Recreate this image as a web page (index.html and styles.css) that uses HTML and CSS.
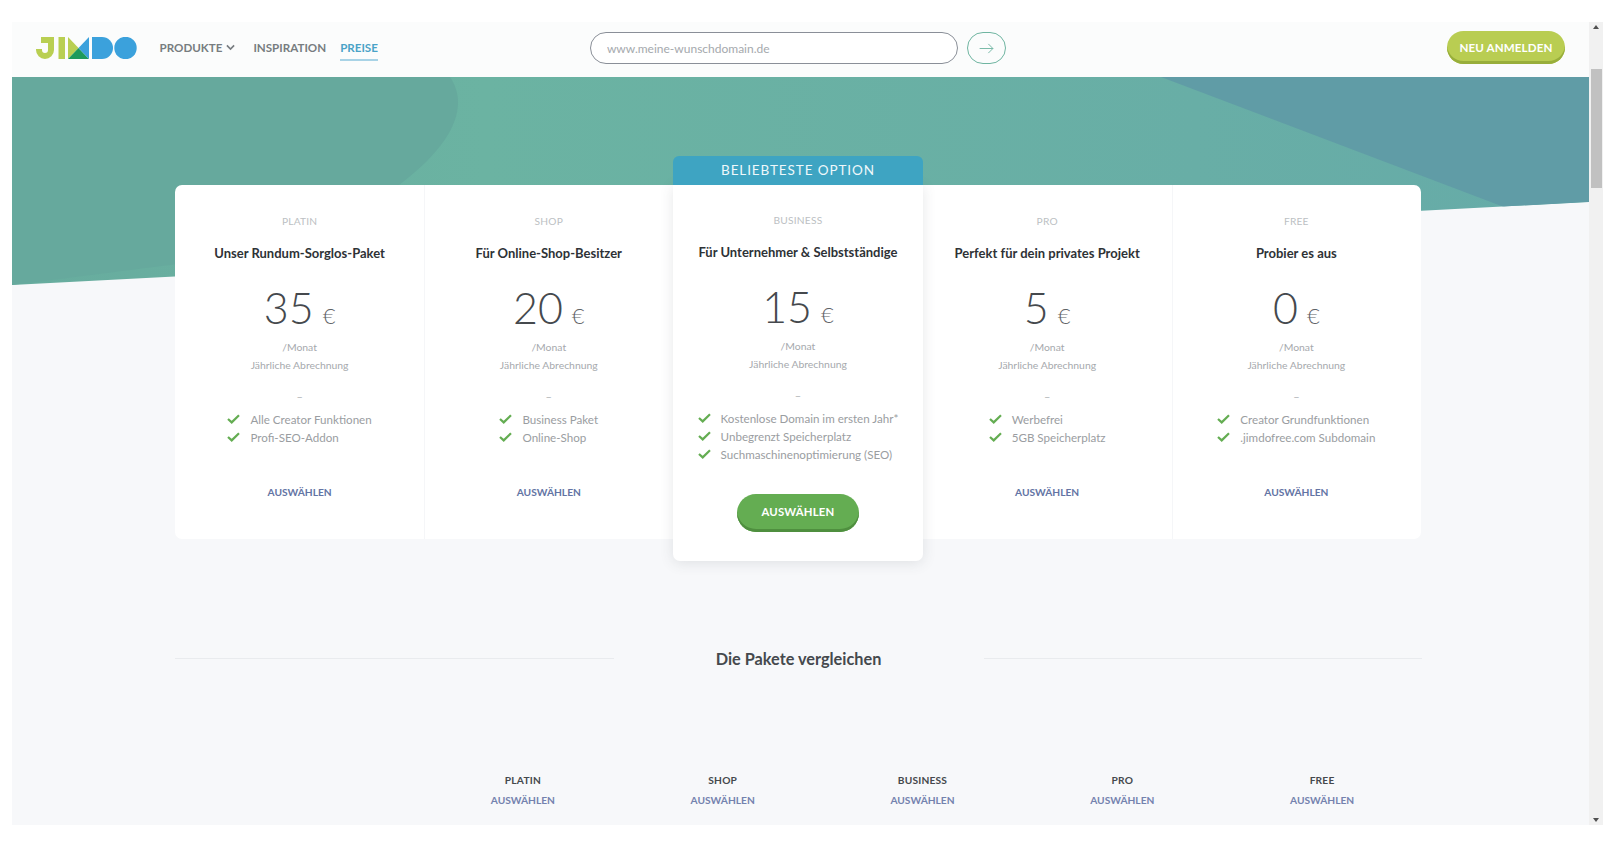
FILE: index.html
```html
<!DOCTYPE html>
<html lang="de">
<head>
<meta charset="utf-8">
<title>Jimdo Preise</title>
<link rel="stylesheet" href="styles.css">
</head>
<body>
<div class="window">
  <div class="page">
    <header class="topbar">
      <svg class="logo" viewBox="0 0 101 22" width="101" height="22" aria-label="Jimdo">
        <path fill="#b9cf52" d="M5 0H18V13A9 9 0 0 1 0 13V12H6V13A3 3 0 0 0 12 13V6H5Z"/>
        <rect fill="#b9cf52" x="22.5" y="0" width="6.5" height="22"/>
        <path fill="#b9cf52" d="M32 0 42.5 11 32 22Z"/>
        <path fill="#1d9a5b" d="M32 22 42.5 11 53 22Z"/>
        <path fill="#3ba1dc" d="M53 0V22L42.5 11Z"/>
        <path fill="#3ba1dc" d="M56 0H66A11 11 0 0 1 66 22H56Z"/>
        <circle fill="#3ba1dc" cx="89.5" cy="11" r="11.2"/>
      </svg>
      <nav class="nav">
        <a class="nav-link nav-products">PRODUKTE
          <svg class="chevron" viewBox="0 0 10 7" width="9" height="7"><path d="M1 1.2 5 5.2 9 1.2" fill="none" stroke="#777c80" stroke-width="1.8"/></svg>
        </a>
        <a class="nav-link nav-inspiration">INSPIRATION</a>
        <a class="nav-link nav-active">PREISE</a>
      </nav>
      <div class="domain">
        <input class="domain-input" type="text" placeholder="www.meine-wunschdomain.de">
        <button class="domain-go" aria-label="Suchen">
          <svg viewBox="0 0 16 12" width="15" height="11"><path d="M0.5 6H15M10 1 15 6 10 11" fill="none" stroke="#6fb5a1" stroke-width="1"/></svg>
        </button>
      </div>
      <a class="signup">NEU ANMELDEN</a>
    </header>

    <main class="main">
      <svg class="hero" viewBox="0 0 1577 208" width="1577" height="208" aria-hidden="true">
        <defs>
          <linearGradient id="heroFill" x1="0" x2="1" y1="0" y2="0">
            <stop offset="0" stop-color="#67ac9e"/>
            <stop offset="0.3" stop-color="#6bb3a2"/>
            <stop offset="0.75" stop-color="#68aea6"/>
            <stop offset="1" stop-color="#66aba8"/>
          </linearGradient>
          <clipPath id="heroClip"><path d="M0 0H1577V125L0 208Z"/></clipPath>
        </defs>
        <g clip-path="url(#heroClip)">
          <rect width="1577" height="208" fill="url(#heroFill)"/>
          <path fill="#66a99d" d="M0 0H438C455 25 448 62 387 108L300 170 0 208Z"/>
          <path fill="#609ca6" d="M1149 0 1492 130 1577 125V0Z"/>
        </g>
      </svg>

      <section class="plans">
        <article class="plan">
          <div class="tier">PLATIN</div>
          <h2 class="tagline">Unser Rundum-Sorglos-Paket</h2>
          <div class="price"><span class="amount">35</span><span class="currency">€</span></div>
          <p class="billing">/Monat<br>Jährliche Abrechnung</p>
          <div class="dash">–</div>
          <ul class="features">
            <li><svg class="check" viewBox="0 0 13 10" width="13" height="10"><path d="M1 5 4.7 8.4 12 1.2" fill="none" stroke="#64ad52" stroke-width="2.2"/></svg>Alle Creator Funktionen</li>
            <li><svg class="check" viewBox="0 0 13 10" width="13" height="10"><path d="M1 5 4.7 8.4 12 1.2" fill="none" stroke="#64ad52" stroke-width="2.2"/></svg>Profi-SEO-Addon</li>
          </ul>
          <a class="choose">AUSWÄHLEN</a>
        </article>
        <article class="plan">
          <div class="tier">SHOP</div>
          <h2 class="tagline">Für Online-Shop-Besitzer</h2>
          <div class="price"><span class="amount">20</span><span class="currency">€</span></div>
          <p class="billing">/Monat<br>Jährliche Abrechnung</p>
          <div class="dash">–</div>
          <ul class="features">
            <li><svg class="check" viewBox="0 0 13 10" width="13" height="10"><path d="M1 5 4.7 8.4 12 1.2" fill="none" stroke="#64ad52" stroke-width="2.2"/></svg>Business Paket</li>
            <li><svg class="check" viewBox="0 0 13 10" width="13" height="10"><path d="M1 5 4.7 8.4 12 1.2" fill="none" stroke="#64ad52" stroke-width="2.2"/></svg>Online-Shop</li>
          </ul>
          <a class="choose">AUSWÄHLEN</a>
        </article>
        <article class="plan plan-featured">
          <div class="badge">BELIEBTESTE OPTION</div>
          <div class="tier">BUSINESS</div>
          <h2 class="tagline">Für Unternehmer &amp; Selbstständige</h2>
          <div class="price"><span class="amount">15</span><span class="currency">€</span></div>
          <p class="billing">/Monat<br>Jährliche Abrechnung</p>
          <div class="dash">–</div>
          <ul class="features">
            <li><svg class="check" viewBox="0 0 13 10" width="13" height="10"><path d="M1 5 4.7 8.4 12 1.2" fill="none" stroke="#64ad52" stroke-width="2.2"/></svg>Kostenlose Domain im ersten Jahr*</li>
            <li><svg class="check" viewBox="0 0 13 10" width="13" height="10"><path d="M1 5 4.7 8.4 12 1.2" fill="none" stroke="#64ad52" stroke-width="2.2"/></svg>Unbegrenzt Speicherplatz</li>
            <li><svg class="check" viewBox="0 0 13 10" width="13" height="10"><path d="M1 5 4.7 8.4 12 1.2" fill="none" stroke="#64ad52" stroke-width="2.2"/></svg>Suchmaschinenoptimierung (SEO)</li>
          </ul>
          <a class="choose-primary">AUSWÄHLEN</a>
        </article>
        <article class="plan">
          <div class="tier">PRO</div>
          <h2 class="tagline">Perfekt für dein privates Projekt</h2>
          <div class="price"><span class="amount">5</span><span class="currency">€</span></div>
          <p class="billing">/Monat<br>Jährliche Abrechnung</p>
          <div class="dash">–</div>
          <ul class="features">
            <li><svg class="check" viewBox="0 0 13 10" width="13" height="10"><path d="M1 5 4.7 8.4 12 1.2" fill="none" stroke="#64ad52" stroke-width="2.2"/></svg>Werbefrei</li>
            <li><svg class="check" viewBox="0 0 13 10" width="13" height="10"><path d="M1 5 4.7 8.4 12 1.2" fill="none" stroke="#64ad52" stroke-width="2.2"/></svg>5GB Speicherplatz</li>
          </ul>
          <a class="choose">AUSWÄHLEN</a>
        </article>
        <article class="plan">
          <div class="tier">FREE</div>
          <h2 class="tagline">Probier es aus</h2>
          <div class="price"><span class="amount">0</span><span class="currency">€</span></div>
          <p class="billing">/Monat<br>Jährliche Abrechnung</p>
          <div class="dash">–</div>
          <ul class="features">
            <li><svg class="check" viewBox="0 0 13 10" width="13" height="10"><path d="M1 5 4.7 8.4 12 1.2" fill="none" stroke="#64ad52" stroke-width="2.2"/></svg>Creator Grundfunktionen</li>
            <li><svg class="check" viewBox="0 0 13 10" width="13" height="10"><path d="M1 5 4.7 8.4 12 1.2" fill="none" stroke="#64ad52" stroke-width="2.2"/></svg>.jimdofree.com Subdomain</li>
          </ul>
          <a class="choose">AUSWÄHLEN</a>
        </article>
      </section>

      <section class="compare">
        <div class="compare-heading">
          <span class="rule"></span>
          <h3 class="compare-title">Die Pakete vergleichen</h3>
          <span class="rule"></span>
        </div>
        <div class="compare-head">
          <div class="compare-corner"></div>
          <div class="compare-col"><div class="compare-name">PLATIN</div><a class="compare-link">AUSWÄHLEN</a></div>
          <div class="compare-col"><div class="compare-name">SHOP</div><a class="compare-link">AUSWÄHLEN</a></div>
          <div class="compare-col"><div class="compare-name">BUSINESS</div><a class="compare-link">AUSWÄHLEN</a></div>
          <div class="compare-col"><div class="compare-name">PRO</div><a class="compare-link">AUSWÄHLEN</a></div>
          <div class="compare-col"><div class="compare-name">FREE</div><a class="compare-link">AUSWÄHLEN</a></div>
        </div>
      </section>
    </main>
  </div>

  <div class="scrollbar" aria-hidden="true">
    <span class="scroll-up"></span>
    <span class="scroll-thumb"></span>
    <span class="scroll-down"></span>
  </div>
</div>
</body>
</html>
```

FILE: styles.css
```css
* { box-sizing: border-box; }

html, body { height: 100%; }

body {
  margin: 0;
  background: #fff;
  font-family: Lato, "Open Sans", sans-serif;
  overflow: hidden;
}

.window {
  display: flex;
  height: 803px;
  margin: 22px 9px 0 12px;
  overflow: hidden;
}

.page {
  width: 1577px;
  background: #f7f8fa;
  overflow: hidden;
}

/* top bar */
.topbar {
  display: flex;
  align-items: center;
  height: 55px;
  padding: 0 24px 3px 24px;
  background: #fbfcfc;
}

.logo { flex: none; }

.nav {
  display: flex;
  align-items: center;
  margin-left: 22.5px;
  margin-top: -1px;
  font-size: 11.6px;
  font-weight: 700;
  color: #777c80;
}

.nav-link { display: flex; align-items: center; height: 22px; }

.chevron { margin-left: 4px; }

.nav-inspiration { margin-left: 18px; }

.nav-active {
  margin-left: 14px;
  color: #4aa3c7;
  border-bottom: 2px solid #a8d3e6;
  height: 24px;
  margin-top: 2px;
}

.domain {
  display: flex;
  margin-left: 212px;
  gap: 9.5px;
}

.domain-input {
  width: 368px;
  height: 32px;
  padding: 0 16px;
  border: 1px solid #8a8f98;
  border-radius: 16px;
  background: #fff;
  font-family: inherit;
  font-size: 12px;
  outline: none;
}

.domain-input::placeholder { color: #a5a9ad; opacity: 1; }

.domain-go {
  display: flex;
  align-items: center;
  justify-content: center;
  width: 39px;
  height: 32px;
  padding: 0;
  border: 1px solid #6fb5a1;
  border-radius: 16px;
  background: transparent;
}

.signup {
  display: flex;
  align-items: center;
  justify-content: center;
  width: 118px;
  height: 33px;
  margin-left: auto;
  margin-top: -1px;
  border-radius: 17px;
  background: #b9cd52;
  box-shadow: inset 0 -3px 0 #98ae3b;
  color: #fff;
  font-size: 11.6px;
  font-weight: 700;
  letter-spacing: .1px;
}

/* hero and plans */
.main { position: relative; }

.hero { position: absolute; top: 0; left: 0; display: block; }

.plans {
  position: relative;
  display: grid;
  grid-template-columns: repeat(5, 249.2px);
  align-items: start;
  margin: 0 0 0 163px;
  padding-top: 108px;
  text-align: center;
}

.plan {
  height: 353.5px;
  padding-top: 28px;
  background: #fff;
  box-shadow: inset 1px 0 0 #f5f6f8;
}

.plan:first-child { box-shadow: none; border-radius: 7px 0 0 7px; }
.plan:last-child { border-radius: 0 7px 7px 0; }

.plan-featured {
  position: relative;
  z-index: 1;
  height: 376px;
  padding-top: 27px;
  border-radius: 0 0 7px 7px;
  box-shadow: 0 2px 14px rgba(60, 70, 80, .13);
}

.plan-featured + .plan { box-shadow: none; }

.badge {
  height: 29px;
  margin: -56px 0 27px;
  border-radius: 6px 6px 0 0;
  background: #3ea4c2;
  color: #eef8fb;
  font-size: 13.5px;
  line-height: 28px;
  letter-spacing: .9px;
}

.tier {
  font-size: 10.2px;
  line-height: 16px;
  color: #bcbfc3;
  letter-spacing: .2px;
}

.tagline {
  margin: 14px 0 0;
  font-size: 13px;
  font-weight: 700;
  line-height: 20px;
  color: #2e3236;
}

.price {
  display: flex;
  align-items: baseline;
  justify-content: center;
  height: 50px;
  margin-top: 20px;
  line-height: 50px;
  color: #45494d;
}

.amount { font-size: 43px; font-weight: 300; }

.currency {
  margin-left: 9px;
  font-size: 22px;
  font-weight: 300;
  color: #5f6367;
}

.billing {
  margin: 6px 0 0;
  font-size: 10.4px;
  line-height: 17.5px;
  color: #a6a9ad;
}

.dash {
  margin-top: 15px;
  font-size: 11px;
  line-height: 16px;
  color: #b4b7ba;
}

.features {
  display: inline-block;
  margin: 6px 0 0;
  padding: 0;
  list-style: none;
  text-align: left;
  font-size: 11.6px;
  line-height: 18px;
  color: #9a9da1;
}

.features li { display: flex; align-items: center; white-space: nowrap; }

.check { flex: none; margin: -3px 10px 0 0; }

.choose {
  display: block;
  font-size: 10.2px;
  font-weight: 700;
  line-height: 16px;
  color: #6374a4;
  margin-top: 37px;
}

.choose-primary {
  display: block;
  width: 122px;
  height: 38px;
  margin: 29.5px auto 0;
  border-radius: 19px;
  background: #64ad52;
  box-shadow: inset 0 -3px 0 #4f8f3f;
  color: #fff;
  font-size: 11.3px;
  font-weight: 700;
  line-height: 36px;
  letter-spacing: .2px;
}

/* compare */
.compare { position: relative; width: 1247px; margin-left: 163px; }

.compare-heading {
  display: flex;
  align-items: center;
  height: 24px;
  margin-top: 85px;
}

.rule { flex: 1; height: 1px; background: #e9ebee; }

.compare-title {
  width: 370px;
  margin: 0;
  text-align: center;
  font-size: 16.3px;
  font-weight: 700;
  color: #45494d;
}

.compare-head {
  display: grid;
  grid-template-columns: 248px repeat(5, 199.8px);
  margin-top: 100px;
  text-align: center;
}

.compare-name {
  font-size: 10.2px;
  font-weight: 700;
  line-height: 20px;
  letter-spacing: .2px;
  color: #45494d;
}

.compare-link {
  display: block;
  font-size: 10.2px;
  font-weight: 700;
  line-height: 20px;
  color: #7482ae;
}

/* scrollbar */
.scrollbar {
  display: flex;
  flex-direction: column;
  align-items: center;
  width: 14px;
  background: #f1f1f1;
}

.scroll-up {
  margin-top: 3px;
  border: 3.5px solid transparent;
  border-top: 0;
  border-bottom: 4px solid #505050;
}

.scroll-thumb {
  width: 11px;
  height: 119px;
  margin-top: 40px;
  background: #c1c1c1;
}

.scroll-down {
  margin-top: auto;
  margin-bottom: 3px;
  border: 3.5px solid transparent;
  border-bottom: 0;
  border-top: 4px solid #505050;
}
```
